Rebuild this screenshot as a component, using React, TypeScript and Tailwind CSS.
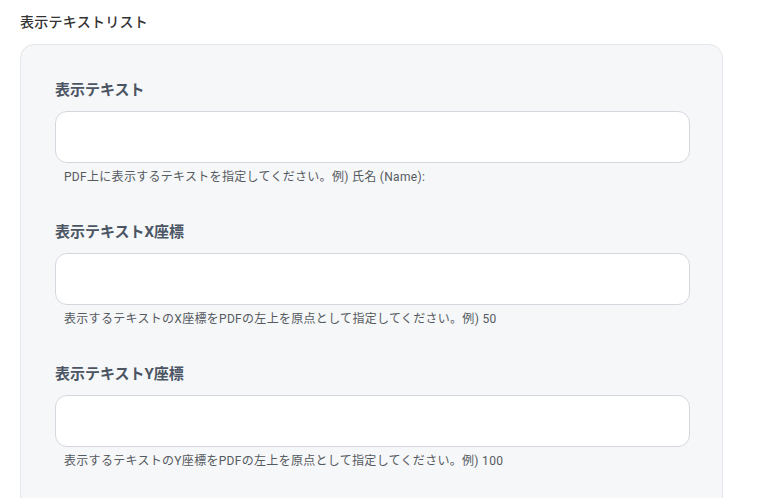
const fields = [
	{
		label: "表示テキスト",
		help: "PDF上に表示するテキストを指定してください。例) 氏名 (Name):",
	},
	{
		label: "表示テキストX座標",
		help: "表示するテキストのX座標をPDFの左上を原点として指定してください。例) 50",
	},
	{
		label: "表示テキストY座標",
		help: "表示するテキストのY座標をPDFの左上を原点として指定してください。例) 100",
	},
];

export default function App() {
	return (
		<div
			className="h-[498px] w-[762px] overflow-hidden bg-white pl-5 pt-3"
			style={{ fontFamily: 'Roboto, "Noto Sans CJK JP", sans-serif' }}
		>
			<h2 className="text-[14px] leading-5 font-medium tracking-[0.02em] text-[#333333]">
				表示テキストリスト
			</h2>
			<div className="mt-3 w-[703px] rounded-[14px] border border-[#e4e6ea] bg-[#f6f7f9] pt-[34px] pl-[34px] pr-[32px] pb-10">
				<div className="flex flex-col gap-[35px]">
					{fields.map((f) => (
						<div key={f.label} className="flex flex-col">
							<label className="text-[15px] leading-[22px] font-bold text-[#4b5563]">
								{f.label}
							</label>
							<input
								type="text"
								className="mt-[10px] h-[52px] w-full rounded-[12px] border border-[#d4d8de] bg-white px-4 text-sm outline-none"
							/>
							<p className="mt-[5px] pl-[9px] text-[12px] leading-[18px] tracking-[0.025em] text-[#555a60]">
								{f.help}
							</p>
						</div>
					))}
				</div>
			</div>
		</div>
	);
}
